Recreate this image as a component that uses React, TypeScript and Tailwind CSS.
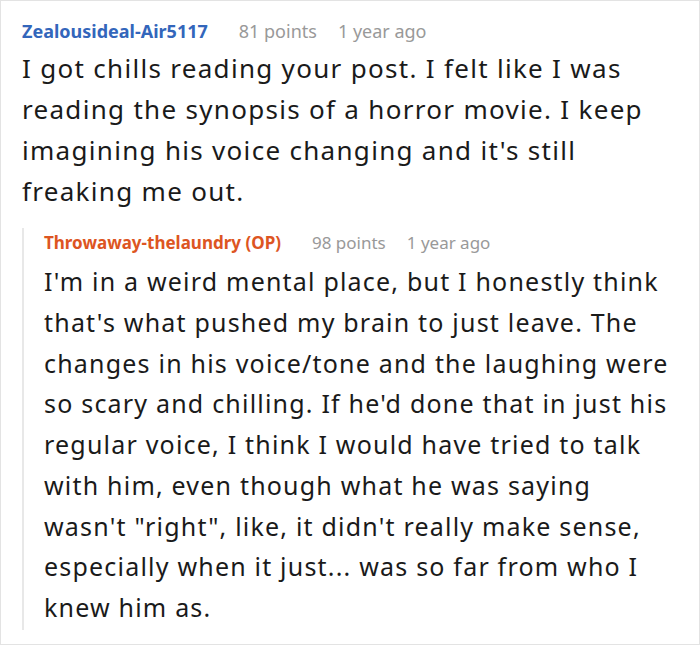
const font = { fontFamily: '"Noto Sans", "Open Sans", sans-serif' }

function CommentHeader({
  name,
  nameClass,
  points,
  time,
  size,
}: {
  name: string
  nameClass: string
  points: string
  time: string
  size: string
}) {
  return (
    <div className={`flex items-baseline leading-[24px] ${size}`}>
      <span className={`font-bold ${nameClass}`}>{name}</span>
      <span className="ml-[31px] text-[#999999]">{points}</span>
      <span className="ml-[21px] text-[#999999]">{time}</span>
    </div>
  )
}

export default function App() {
  return (
    <div style={font} className="w-[700px] h-[646px] bg-white">
      <div className="h-[645px] border border-[#e3e3e3] pl-[21px] pr-[3px] pt-[18px]">
        <CommentHeader
          name="Zealousideal-Air5117"
          nameClass="text-[#3366bb]"
          points="81 points"
          time="1 year ago"
          size="text-[18px]"
        />
        <p className="mt-[5px] w-[640px] text-[26px] leading-[41px] tracking-[1.3px] text-[#1a1a1a]">
          I got chills reading your post. I felt like I was reading the synopsis of a horror movie. I keep imagining his
          voice changing and it's still freaking me out.
        </p>
        <div className="mt-[16px] border-l-2 border-[#e8e8e8] pl-[20px] pt-[3px] pb-[2px]">
          <CommentHeader
            name="Throwaway-thelaundry (OP)"
            nameClass="text-[#dd5522]"
            points="98 points"
            time="1 year ago"
            size="text-[17px]"
          />
          <p className="mt-[6px] w-[636px] text-[25px] leading-[40.75px] tracking-[1.2px] text-[#1a1a1a]">
            I'm in a weird mental place, but I honestly think that's what pushed my brain to just leave. The changes in
            his voice/tone and the laughing were so scary and chilling. If he'd done that in just his regular voice, I
            think I would have tried to talk with him, even though what he was saying wasn't "right", like, it didn't
            really make sense, especially when it just... was so far from who I knew him as.
          </p>
        </div>
      </div>
    </div>
  )
}
